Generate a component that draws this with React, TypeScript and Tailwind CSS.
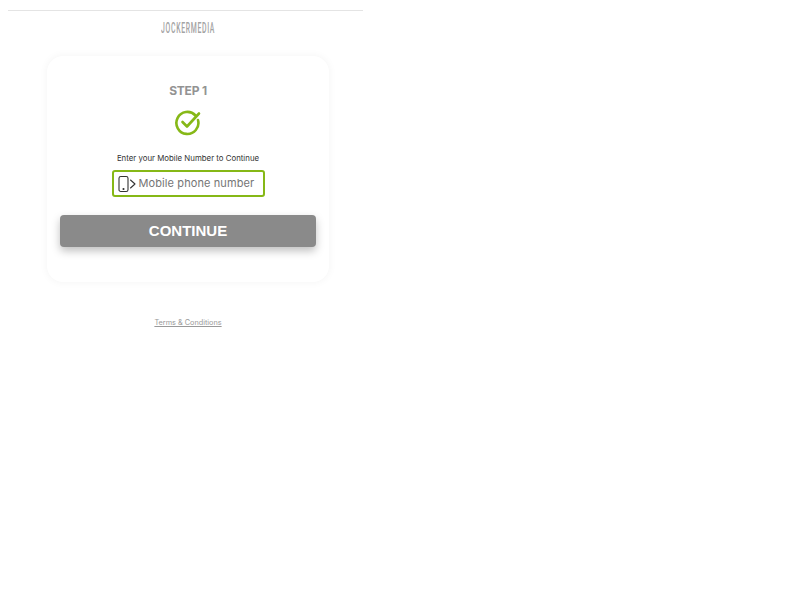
import React from "react";

function CheckIcon(): React.JSX.Element {
  return (
    <svg width="28" height="26" viewBox="0 0 28 26" fill="none" stroke="#86b817" strokeWidth="2.6" strokeLinecap="round" strokeLinejoin="round">
      <path d="M21.5 5.5 A11 11 0 1 0 24 10" />
      <path d="M8.5 12 L13 16.5 L25 3.5" />
    </svg>
  );
}

function PhoneIcon(): React.JSX.Element {
  return (
    <svg className="shrink-0" width="18" height="18" viewBox="0 0 18 18" fill="none" stroke="#333" strokeWidth="1.1" strokeLinecap="round" strokeLinejoin="round">
      <rect x="1" y="1.5" width="9" height="15" rx="1.8" />
      <circle cx="5.5" cy="14" r="0.5" fill="#333" />
      <path d="M12.5 5 L17 9 L12.5 13" />
    </svg>
  );
}

export default function App(): React.JSX.Element {
  return (
    <div className="w-[800px] h-[600px] bg-white overflow-hidden font-['Inter',sans-serif]">
      <div className="w-[360px] ml-2 pt-[10px] flex flex-col items-center">
        <div className="w-[355px] self-start border-t border-[#e4e4e4]" />
        <div className="h-[18px] mt-[8px] flex items-center justify-center">
          <span className="font-['Roboto',sans-serif] font-medium text-[14px] leading-none tracking-[1.4px] text-[#a3a3a3] scale-x-[0.49] whitespace-nowrap">
            JOCKERMEDIA
          </span>
        </div>
        <div className="w-[282px] h-[226px] mt-[19px] rounded-2xl bg-white shadow-[0_0_8px_rgba(0,0,0,0.05)] flex flex-col items-center px-[13px] pt-[27px]">
          <div className="font-bold text-[12px] tracking-[-0.2px] leading-4 text-[#939393]">STEP 1</div>
          <div className="mt-[11px] h-[26px]">
            <CheckIcon />
          </div>
          <div className="mt-[16px] text-[7.85px] leading-3 text-[#333]">
            Enter your Mobile Number to Continue
          </div>
          <div className="mt-[6px] w-[153px] h-[27px] shrink-0 rounded-[3px] border-2 border-[#86b817] flex items-center gap-[3px] pl-[4px]">
            <PhoneIcon />
            <span className="text-[11px] tracking-[0.1px] text-[#757575] whitespace-nowrap">
              Mobile phone number
            </span>
          </div>
          <button className="mt-[18px] w-[256px] h-[32px] shrink-0 rounded-[4px] bg-[#8a8a8a] shadow-[0_4px_8px_rgba(0,0,0,0.25)] font-['Liberation_Sans',sans-serif] font-bold text-[15px] text-white">
            CONTINUE
          </button>
        </div>
        <a className="mt-[35px] text-[7.3px] leading-3 text-[#999999] underline">
          Terms &amp; Conditions
        </a>
      </div>
    </div>
  );
}
